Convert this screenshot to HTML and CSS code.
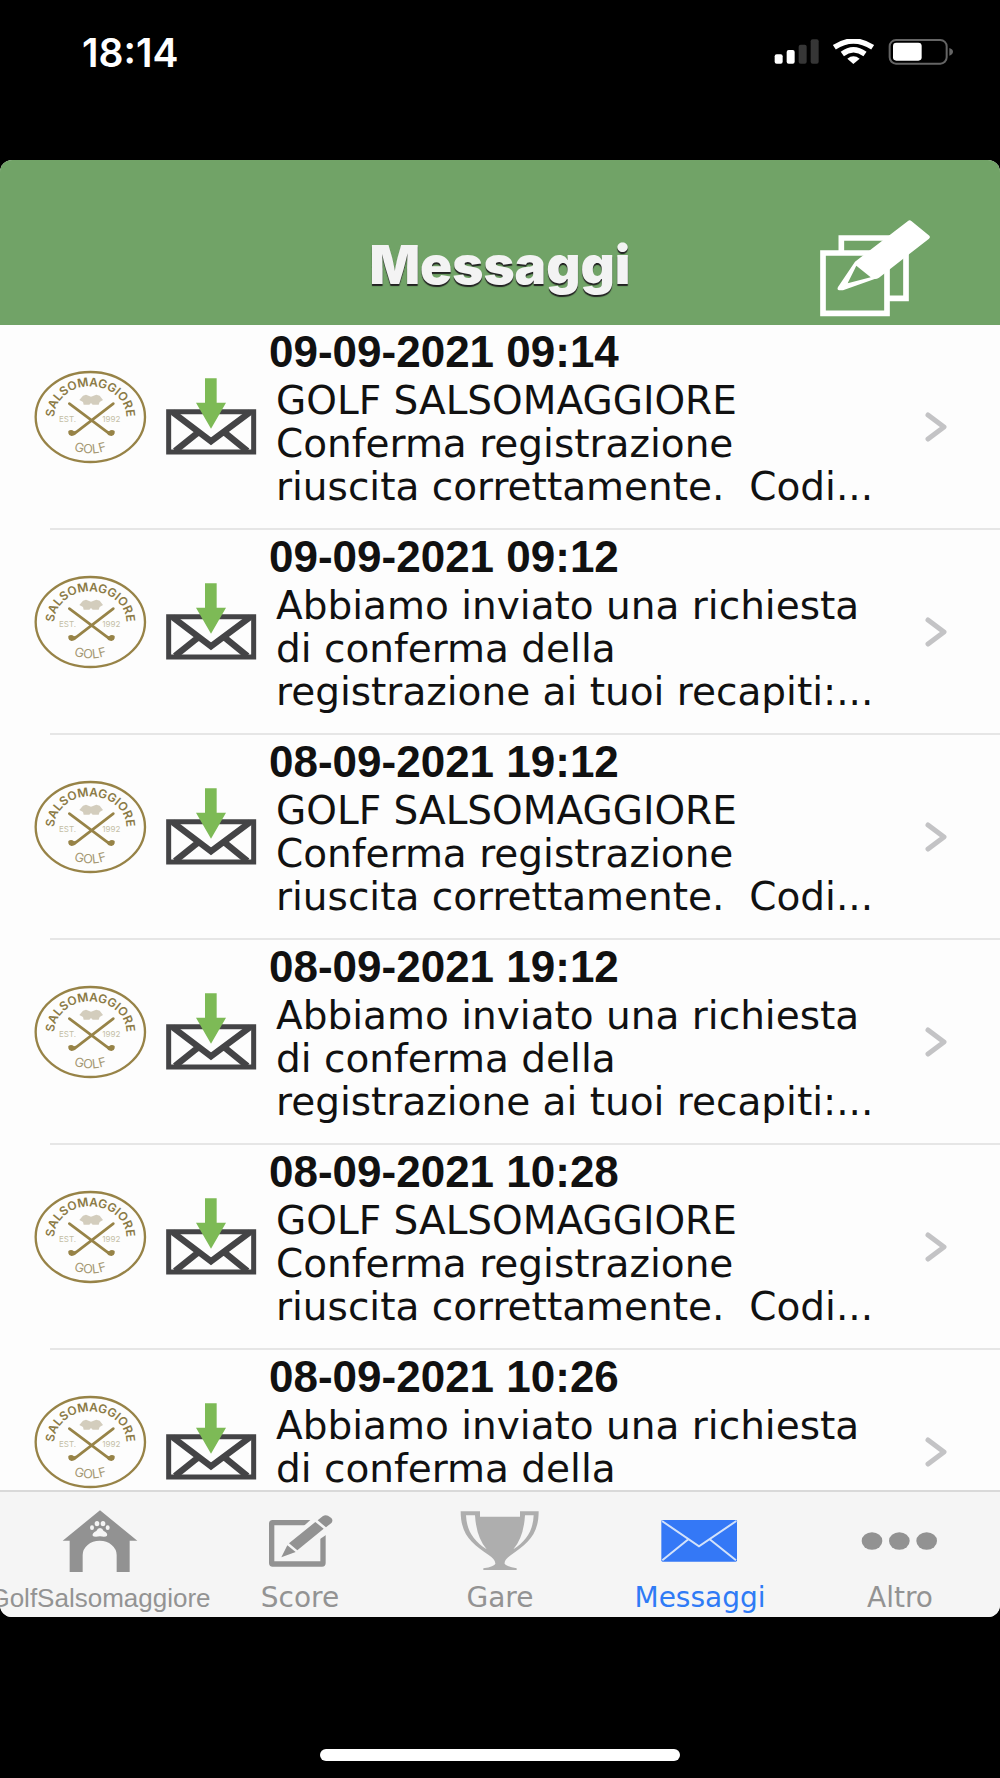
FILE: index.html
```
<!DOCTYPE html>
<html lang="it">
<head>
<meta charset="utf-8">
<meta name="viewport" content="width=device-width, initial-scale=1">
<title>Messaggi</title>
<link rel="stylesheet" href="styles.css">
</head>
<body>
<svg class="sprite" aria-hidden="true">
  <symbol id="logo" viewBox="0 0 339 282">
    <ellipse cx="169" cy="141" rx="164" ry="135" fill="none" stroke="#978347" stroke-width="7"/>
    <path id="arc-top" d="M61 141 A108 92 0 0 1 277 141" fill="none"/>
    <path id="arc-bottom" d="M39 141 A130 109 0 0 0 299 141" fill="none"/>
    <text class="logo-name"><textPath href="#arc-top" startOffset="50%" text-anchor="middle">SALSOMAGGIORE</textPath></text>
    <text class="logo-golf"><textPath href="#arc-bottom" startOffset="50%" text-anchor="middle">GOLF</textPath></text>
    <text class="logo-year" x="75" y="156">EST.</text>
    <text class="logo-year" x="205" y="156">1992</text>
    <path d="M136 90 L147 77 L156 74 L171 80 L187 74 L197 77 L207 90 L197 96 L194 104 L176 104 L171 99 L166 104 L149 104 L147 96 Z" fill="#d3cdbd"/>
    <path d="M106 101 L225 190 M238 101 L122 190" stroke="#978347" stroke-width="8" stroke-linecap="round"/>
    <path d="M103 183 Q112 176 120 184 L126 182 Q130 187 121 196 Q106 202 103 190 Z M242 183 Q233 176 225 184 L219 182 Q215 187 224 196 Q239 202 242 190 Z" fill="#978347"/>
  </symbol>
  <symbol id="inbox" viewBox="0 0 273 237">
    <g fill="none" stroke="#444446" stroke-width="15">
      <path d="M8 104 H263 V225 H8 Z"/>
      <path d="M20 106 L135 193 L252 106 M27 222 L98 165 M244 222 L174 165" stroke-width="19"/>
    </g>
    <path d="M117 4 H152 V77 H180 L135 155 L90 77 H117 Z" fill="#7dba56"/>
  </symbol>
  <symbol id="chevron" viewBox="0 0 24 32">
    <path d="M4 4 L20 16 L4 28" fill="none" stroke="#c3c3c5" stroke-width="5" stroke-linecap="round" stroke-linejoin="round"/>
  </symbol>
</svg>

<div class="phone">
  <div class="status">
    <time class="clock">18:14</time>
    <svg class="status-icons" viewBox="0 0 540 78" aria-hidden="true">
      <rect x="5" y="46" width="24" height="28" rx="6" fill="#fff"/>
      <rect x="41" y="33" width="24" height="41" rx="6" fill="#fff"/>
      <rect x="77" y="17" width="24" height="57" rx="6" fill="#363636"/>
      <rect x="113" y="1" width="24" height="73" rx="6" fill="#363636"/>
      <g fill="none" stroke="#fff" stroke-width="16">
        <path d="M184 25 Q241 -13 299 25"/>
        <path d="M208 45 Q241 20 276 45"/>
      </g>
      <path d="M223 59 Q241 45 260 59 L241 75 Z" fill="#fff"/>
      <rect x="350" y="3" width="171" height="71" rx="19" fill="none" stroke="#656565" stroke-width="6"/>
      <rect x="360" y="11" width="86" height="54" rx="10" fill="#fff"/>
      <path d="M529 27 Q540 31 540 38 Q540 45 529 50 Z" fill="#656565"/>
    </svg>
  </div>

  <div class="screen">
    <header class="header">
      <h1 class="title">Messaggi</h1>
      <button class="compose" type="button" aria-label="Nuovo messaggio">
        <svg viewBox="0 0 336 291" aria-hidden="true">
          <g fill="none" stroke="#fff" stroke-width="17">
            <path d="M67 96 V54 H261 V235 H210"/>
            <path d="M12 99 H204 V280 H12 Z"/>
          </g>
          <path d="M108 125 L267 3 Q272 -1 277 3 L331 47 Q335 52 330 56 L180 173 Q172 178 167 177 L72 211 L60 211 Q53 209 57 201 Z" fill="#fff"/>
          <path d="M112 137 L155 172 L86 190 Z" fill="#71a367"/>
        </svg>
      </button>
    </header>

    <main class="list">
      <a class="row" href="#m1">
        <svg class="logo"><use href="#logo"/></svg>
        <svg class="inbox"><use href="#inbox"/></svg>
        <span class="message"><time class="date">09-09-2021 09:14</time>
        <span class="text">GOLF SALSOMAGGIORE<br>Conferma registrazione<br>riuscita correttamente.&nbsp; Codi...</span></span>
        <svg class="chevron"><use href="#chevron"/></svg>
      </a>
      <a class="row" href="#m2">
        <svg class="logo"><use href="#logo"/></svg>
        <svg class="inbox"><use href="#inbox"/></svg>
        <span class="message"><time class="date">09-09-2021 09:12</time>
        <span class="text">Abbiamo inviato una richiesta<br>di conferma della<br>registrazione ai tuoi recapiti:...</span></span>
        <svg class="chevron"><use href="#chevron"/></svg>
      </a>
      <a class="row" href="#m3">
        <svg class="logo"><use href="#logo"/></svg>
        <svg class="inbox"><use href="#inbox"/></svg>
        <span class="message"><time class="date">08-09-2021 19:12</time>
        <span class="text">GOLF SALSOMAGGIORE<br>Conferma registrazione<br>riuscita correttamente.&nbsp; Codi...</span></span>
        <svg class="chevron"><use href="#chevron"/></svg>
      </a>
      <a class="row" href="#m4">
        <svg class="logo"><use href="#logo"/></svg>
        <svg class="inbox"><use href="#inbox"/></svg>
        <span class="message"><time class="date">08-09-2021 19:12</time>
        <span class="text">Abbiamo inviato una richiesta<br>di conferma della<br>registrazione ai tuoi recapiti:...</span></span>
        <svg class="chevron"><use href="#chevron"/></svg>
      </a>
      <a class="row" href="#m5">
        <svg class="logo"><use href="#logo"/></svg>
        <svg class="inbox"><use href="#inbox"/></svg>
        <span class="message"><time class="date">08-09-2021 10:28</time>
        <span class="text">GOLF SALSOMAGGIORE<br>Conferma registrazione<br>riuscita correttamente.&nbsp; Codi...</span></span>
        <svg class="chevron"><use href="#chevron"/></svg>
      </a>
      <a class="row" href="#m6">
        <svg class="logo"><use href="#logo"/></svg>
        <svg class="inbox"><use href="#inbox"/></svg>
        <span class="message"><time class="date">08-09-2021 10:26</time>
        <span class="text">Abbiamo inviato una richiesta<br>di conferma della</span></span>
        <svg class="chevron"><use href="#chevron"/></svg>
      </a>
    </main>

    <nav class="tabs">
      <a class="tab" href="#home">
        <svg class="tab-icon" viewBox="0 0 240 192" aria-hidden="true">
          <path d="M120 4 L232 95 H209 V189 H170 V138 A50 42 0 0 0 68 138 V189 H29 V95 H8 Z" fill="#929292"/>
          <g fill="#f5f5f5"><ellipse cx="96" cy="56" rx="6" ry="7"/><ellipse cx="111" cy="44" rx="7" ry="8"/><ellipse cx="129" cy="44" rx="7" ry="8"/><ellipse cx="143" cy="56" rx="6" ry="7"/><path d="M120 57 Q127 57 131 66 Q144 72 141 80 Q138 85 120 82 Q101 85 98 80 Q96 72 109 66 Q113 57 120 57 Z"/></g>
        </svg>
        <span class="tab-label tab-label-long">GolfSalsomaggiore</span>
      </a>
      <a class="tab" href="#score">
        <svg class="tab-icon" viewBox="0 0 240 192" aria-hidden="true">
          <rect x="35" y="41" width="154" height="124" rx="3" fill="none" stroke="#929292" stroke-width="16"/>
          <path d="M152 32 L205 10 L222 50 L198 78 L108 138 L60 152 L75 102 Z" fill="#f5f5f5"/>
          <path d="M64 145 L82 109 L107 129 Z M87 103 L166 39 L191 59 L112 124 Z M173 34 L188 22 Q195 17 204 20 L214 27 Q220 34 215 41 L198 55 Z" fill="#929292"/>
        </svg>
        <span class="tab-label">Score</span>
      </a>
      <a class="tab" href="#gare">
        <svg class="tab-icon" viewBox="0 0 240 192" aria-hidden="true">
          <path d="M2 7 H60 V23 H180 V7 H236 C236 80 200 105 153 138 Q132 152 134 164 Q138 172 170 178 V183 H70 V178 Q104 172 106 164 Q107 152 86 138 C38 105 2 80 2 7 Z" fill="#aeaeae"/>
          <path d="M18 19 H45 Q49 85 80 121 C40 95 20 65 18 19 Z M221 19 H195 Q191 85 160 121 C200 95 219 65 221 19 Z" fill="#f5f5f5"/>
        </svg>
        <span class="tab-label">Gare</span>
      </a>
      <a class="tab tab-active" href="#messaggi" aria-current="page">
        <svg class="tab-icon" viewBox="0 0 240 192" aria-hidden="true">
          <rect x="4" y="33" width="227" height="125" rx="4" fill="#3478f6"/>
          <path d="M6 36 L117 112 L229 36 M7 154 L85 91 M228 154 L149 91" fill="none" stroke="#d3e2fa" stroke-width="6"/>
        </svg>
        <span class="tab-label">Messaggi</span>
      </a>
      <a class="tab" href="#altro">
        <svg class="tab-icon" viewBox="0 0 240 192" aria-hidden="true">
          <g fill="#929292"><ellipse cx="36" cy="96" rx="31" ry="26"/><ellipse cx="118" cy="96" rx="31" ry="26"/><ellipse cx="200" cy="96" rx="31" ry="26"/></g>
        </svg>
        <span class="tab-label">Altro</span>
      </a>
    </nav>
  </div>

  <div class="home-area"><div class="home-bar"></div></div>
</div>
</body>
</html>
```
FILE: styles.css
```
* { box-sizing: border-box; }

body {
  margin: 0;
  background: #000;
  font-family: "DejaVu Sans", sans-serif;
}

.sprite { position: absolute; width: 0; height: 0; }

.logo-name { font: 600 36px Inter, sans-serif; fill: #8b7a45; }
.logo-golf { font: 400 38px Inter, sans-serif; fill: #a59873; }
.logo-year { font: 400 24px Inter, sans-serif; fill: #c4bda5; }

.phone {
  display: flex;
  flex-direction: column;
  height: 100vh;
}

.status {
  display: flex;
  justify-content: space-between;
  align-items: center;
  height: 160px;
  padding: 0 47px 56px 82px;
  flex-shrink: 0;
}

.clock {
  color: #fff;
  font: 600 39px Inter, sans-serif;
}

.status-icons { width: 180px; height: 26px; }

.screen {
  display: flex;
  flex-direction: column;
  flex: 1;
  min-height: 0;
  overflow: hidden;
  border-radius: 12px;
  background: #fdfdfd;
}

.header {
  display: grid;
  grid-template-columns: 1fr auto 1fr;
  align-items: end;
  height: 165px;
  padding: 0 69px 8px;
  flex-shrink: 0;
  background: #71a367;
}

.title {
  grid-column: 2;
  margin: 0;
  padding-bottom: 16px;
  color: #f3f3f3;
  font: 900 53px/72px Inter, sans-serif;
  text-shadow: 0 2px 1px #222;
}

.compose {
  justify-self: end;
  padding: 0;
  border: 0;
  background: none;
}

.compose svg { display: block; width: 112px; height: 97px; overflow: visible; }

.list { flex: 1; min-height: 0; overflow: hidden; }

.row {
  display: flex;
  align-items: flex-start;
  position: relative;
  height: 205px;
  padding: 0 52px 0 34px;
  color: #111;
  text-decoration: none;
}

.row::after {
  content: "";
  position: absolute;
  left: 50px;
  right: 0;
  bottom: 0;
  height: 2px;
  background: #e6e6e6;
}

.logo { width: 113px; height: 94px; margin: 45px 19px 0 0; flex-shrink: 0; }
.inbox { width: 91px; height: 79px; margin: 52px 12px 0 0; flex-shrink: 0; }
.message { flex: 1; min-width: 0; white-space: nowrap; }

.date {
  display: block;
  font: 700 44px/54px "Liberation Sans", sans-serif;
}

.text {
  display: block;
  padding-left: 7px;
  font-size: 39px;
  line-height: 43px;
}

.chevron { width: 24px; height: 32px; margin-top: 86px; flex-shrink: 0; }

.tabs {
  display: grid;
  grid-template-columns: repeat(5, minmax(0, 1fr));
  height: 127px;
  flex-shrink: 0;
  border-top: 2px solid #d9d9d9;
  background: #f5f5f5;
}

.tab {
  display: flex;
  flex-direction: column;
  align-items: center;
  gap: 8px;
  padding-top: 17px;
  color: #939393;
  text-decoration: none;
}

.tab-active { color: #2f7bf6; }
.tab-icon { width: 80px; height: 64px; }

.tab-label { font-size: 28px; line-height: 34px; }
.tab-label-long { font-family: "Liberation Sans", sans-serif; font-size: 26px; }

.home-area {
  display: flex;
  justify-content: center;
  align-items: flex-end;
  height: 161px;
  padding-bottom: 17px;
  flex-shrink: 0;
}

.home-bar {
  width: 36%;
  height: 12px;
  border-radius: 6px;
  background: #fff;
}
```
